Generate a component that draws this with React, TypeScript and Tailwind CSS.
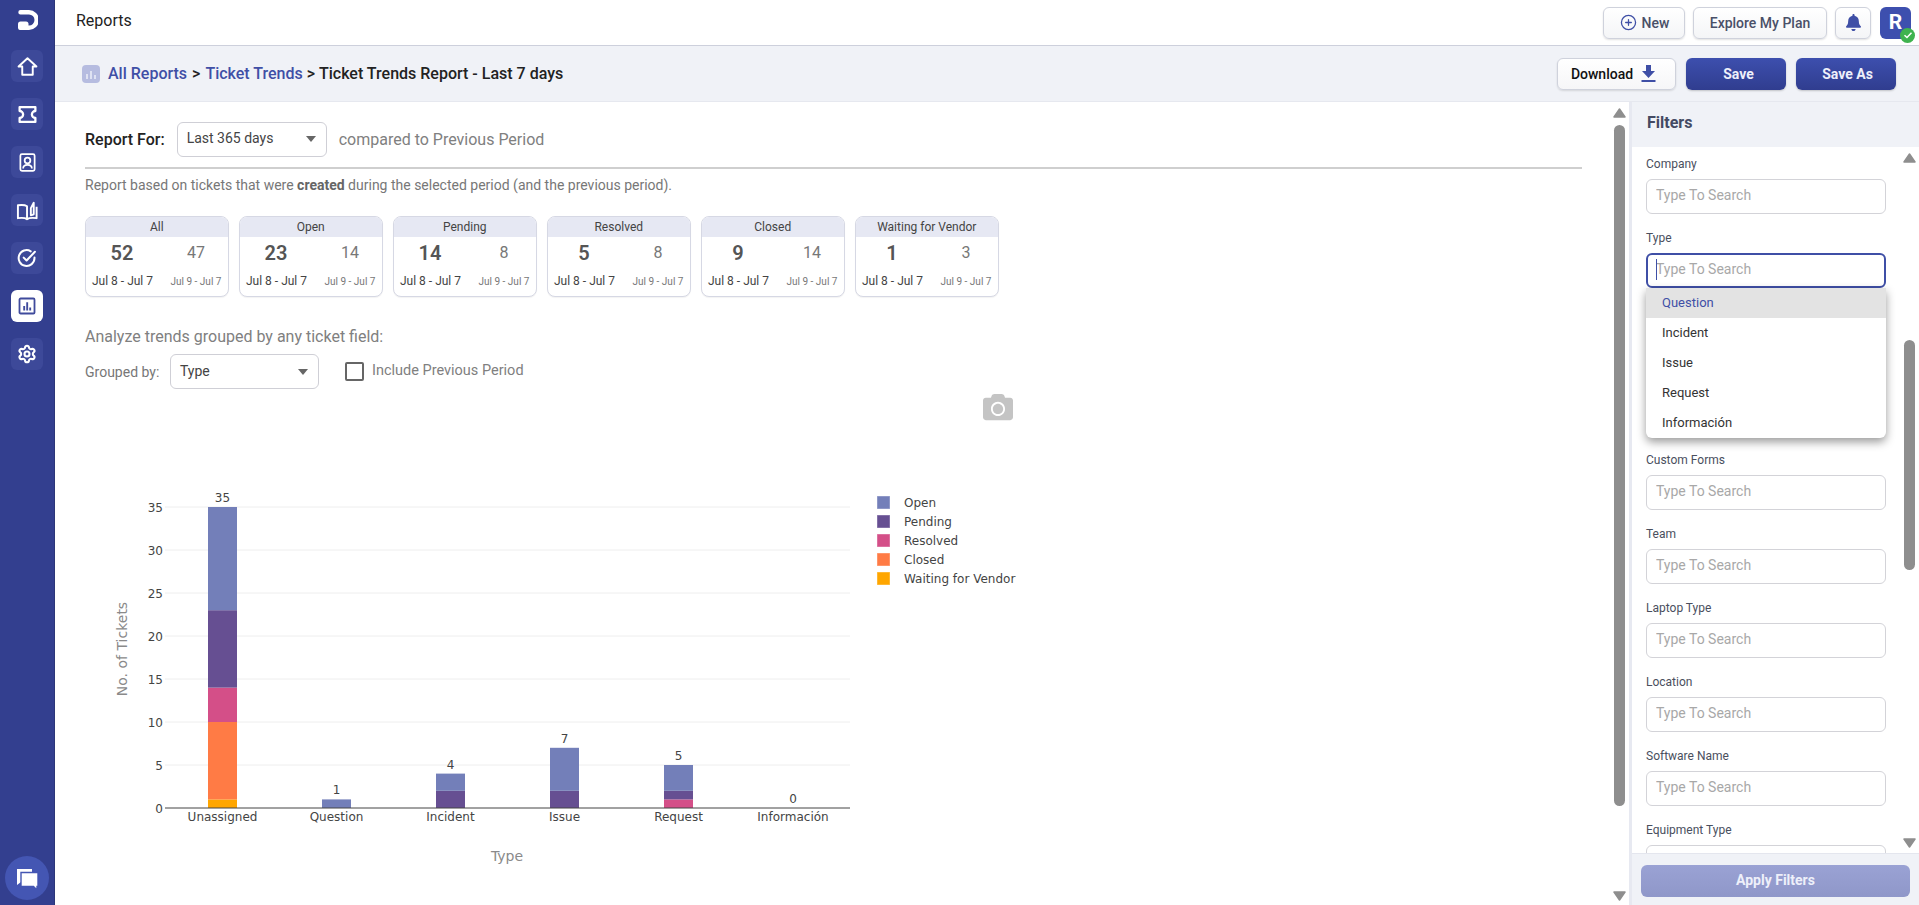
import { CirclePlus, Settings } from 'lucide-react';
import { FaBell, FaCamera } from 'react-icons/fa';

const cards = [
  { label: 'All', now: 52, prev: 47 },
  { label: 'Open', now: 23, prev: 14 },
  { label: 'Pending', now: 14, prev: 8 },
  { label: 'Resolved', now: 5, prev: 8 },
  { label: 'Closed', now: 9, prev: 14 },
  { label: 'Waiting for Vendor', now: 1, prev: 3 },
];

const colors = { open: '#737fb9', pending: '#664f92', resolved: '#d44f88', closed: '#ff7b45', waiting: '#ffa600' };

const legend = [
  { label: 'Open', color: colors.open },
  { label: 'Pending', color: colors.pending },
  { label: 'Resolved', color: colors.resolved },
  { label: 'Closed', color: colors.closed },
  { label: 'Waiting for Vendor', color: colors.waiting },
];

// bottom to top, same order as the stacked trace
const bars = [
  { name: 'Unassigned', x: 222.5, total: 35, parts: [[colors.waiting, 1], [colors.closed, 9], [colors.resolved, 4], [colors.pending, 9], [colors.open, 12]] },
  { name: 'Question', x: 336.5, total: 1, parts: [[colors.open, 1]] },
  { name: 'Incident', x: 450.5, total: 4, parts: [[colors.pending, 2], [colors.open, 2]] },
  { name: 'Issue', x: 564.5, total: 7, parts: [[colors.pending, 2], [colors.open, 5]] },
  { name: 'Request', x: 678.5, total: 5, parts: [[colors.resolved, 1], [colors.pending, 1], [colors.open, 3]] },
  { name: 'Información', x: 793, total: 0, parts: [] },
] as { name: string; x: number; total: number; parts: [string, number][] }[];

const filtersTop = ['Company', 'Type'];
const filtersBottom = ['Custom Forms', 'Team', 'Laptop Type', 'Location', 'Software Name', 'Equipment Type'];

const options = ['Question', 'Incident', 'Issue', 'Request', 'Información'];

const Y0 = 808;
const UNIT = 8.6;

function Logo() {
  return (
    <svg width="20" height="20" viewBox="0 0 20 20">
      <path d="M2.5 2.3H11A7.7 7.7 0 0 1 11 17.7H3" fill="none" stroke="#fff" strokeWidth="4.4" strokeLinecap="round" />
      <rect x="0" y="11.5" width="10.5" height="8.5" rx="2.5" fill="#fff" />
    </svg>
  );
}

function NavIcon({ children, active }: { children: React.ReactNode; active?: boolean }) {
  return (
    <div className={active ? 'w-8 h-8 rounded-md bg-white flex items-center justify-center' : 'w-8 h-8 rounded-md bg-[#3d4999] flex items-center justify-center'}>
      {children}
    </div>
  );
}

function Sidebar() {
  return (
    <aside className="w-[55px] shrink-0 h-full bg-[#333f8f] border-r border-[#2c3678] flex flex-col items-center">
      <div className="h-[50px] w-full flex items-start justify-center pt-[10px] pl-px">
        <Logo />
      </div>
      <div className="flex flex-col gap-4">
        <NavIcon>
          <svg width="21" height="21" viewBox="0 0 24 24" fill="none" stroke="#fff" strokeWidth="2.2" strokeLinejoin="round">
            <path d="M12 2.5 1.8 12H6v9.5h12V12h4.2z" />
          </svg>
        </NavIcon>
        <NavIcon>
          <svg width="21" height="21" viewBox="0 0 24 24" fill="none" stroke="#fff" strokeWidth="2.6" strokeLinejoin="round">
            <path d="M3 3.5h18V8a4 4 0 0 0 0 8v4.500H3V16a4 4 0 0 0 0-8z" />
          </svg>
        </NavIcon>
        <NavIcon>
          <svg width="19" height="19" viewBox="0 0 24 24" fill="none" stroke="#fff" strokeWidth="2.2">
            <rect x="3" y="1.5" width="18" height="21" rx="2" />
            <circle cx="12" cy="9.5" r="3.6" />
            <path d="M6.5 19.5c0-3 2.5-4.6 5.500-4.600s5.500 1.600 5.500 4.600" />
          </svg>
        </NavIcon>
        <NavIcon>
          <svg width="23" height="23" viewBox="0 0 24 24" fill="none" stroke="#fff" strokeWidth="2" strokeLinejoin="round">
            <path d="M11.500 7.500C10 6.500 6 6 2 6.500V20c4-.5 8 0 9.500 1z" />
            <path d="M11.500 21c1.500-1 6-1.500 10-1V8" />
            <path d="M15.500 17V9.500L18.500 4V16z" />
          </svg>
        </NavIcon>
        <NavIcon>
          <svg width="20" height="20" viewBox="0 0 24 24" fill="none" stroke="#fff" strokeWidth="2.4" strokeLinecap="round" strokeLinejoin="round">
            <path d="M21 11.500V12a9.500 9.500 0 1 1-4.500-8" />
            <path d="M8 11.500l3.500 3.500L21.500 4.500" />
          </svg>
        </NavIcon>
        <NavIcon active>
          <svg width="18" height="18" viewBox="0 0 24 24" fill="#3f4a9c">
            <rect x="2" y="2" width="20" height="20" rx="1.500" fill="none" stroke="#3f4a9c" strokeWidth="2.400" />
            <rect x="7" y="12" width="2.500" height="6" />
            <rect x="11" y="7" width="2.500" height="11" />
            <rect x="15" y="14" width="2.500" height="4" />
          </svg>
        </NavIcon>
        <NavIcon>
          <Settings size={20} color="#fff" strokeWidth={2.5} />
        </NavIcon>
      </div>
      <div className="mt-auto mb-[5px] w-11 h-11 rounded-full bg-[#4456b3] flex items-center justify-center">
        <svg width="24" height="24" viewBox="0 0 24 24">
          <path d="M2 3h15v13H6l-4 3z" fill="#fff" />
          <path d="M6 6.500h17V20.500h-1V24l-3.500-3.500H6z" fill="#fff" stroke="#4456b3" strokeWidth="1.400" />
        </svg>
      </div>
    </aside>
  );
}

function TopButton({ children, className }: { children: React.ReactNode; className: string }) {
  return (
    <button className={'h-8 rounded-md border border-[#cfd2dc] bg-gradient-to-b from-white to-[#f4f5f7] shadow-[0_1px_2px_rgba(0,0,0,0.12)] flex items-center justify-center text-sm font-medium text-[#4a5068] ' + className}>
      {children}
    </button>
  );
}

function TopBar() {
  return (
    <header className="h-[46px] shrink-0 bg-white border-b border-[#cdd0dc] flex items-center pl-[21px] pr-2">
      <span className="text-base text-[#222] -mt-1">Reports</span>
      <div className="ml-auto flex items-center">
        <TopButton className="w-[82px] gap-[5px] pl-px">
          <CirclePlus size={17} color="#3f4fa6" strokeWidth={1.800} />
          New
        </TopButton>
        <TopButton className="w-[134px] ml-2">Explore My Plan</TopButton>
        <TopButton className="w-9 ml-2">
          <FaBell size={17} color="#3f4fa6" />
        </TopButton>
        <div className="relative w-[31px] h-8 ml-[9px] rounded-md bg-[#3d4fae] flex items-center justify-center text-white text-[21px] font-bold">
          R
          <span className="absolute -right-1 -bottom-1 w-[15px] h-[15px] rounded-full bg-[#3fb34f] flex items-center justify-center">
            <svg width="10" height="10" viewBox="0 0 10 10" fill="none" stroke="#fff" strokeWidth="1.500">
              <path d="M1.500 5.200 4 7.500 8.500 2.800" />
            </svg>
          </span>
        </div>
      </div>
    </header>
  );
}

function BreadcrumbBar() {
  return (
    <div className="h-[56px] shrink-0 bg-[#f0f2f7] border-b border-[#e6e8ef] flex items-center pl-[27px] pr-[23px]">
      <span className="w-[18px] h-[18px] rounded-sm bg-[#b6bce0] flex items-end justify-center gap-[2px] pb-1">
        <i className="block w-[2px] h-[5px] bg-[#dfe2f2]" />
        <i className="block w-[2px] h-2 bg-[#dfe2f2]" />
        <i className="block w-[2px] h-1 bg-[#dfe2f2]" />
      </span>
      <div className="ml-2 text-base font-medium text-[#222] whitespace-nowrap">
        <span className="text-[#3f4fa6]">All Reports</span>
        <span className="mx-[5px]">&gt;</span>
        <span className="text-[#3f4fa6]">Ticket Trends</span>
        <span className="mx-[4px]">&gt;</span>
        <span>Ticket Trends Report - Last 7 days</span>
      </div>
      <div className="ml-auto flex items-center gap-[10px]">
        <button className="w-[119px] h-8 rounded-md border border-[#cfd2dc] bg-gradient-to-b from-white to-[#f6f6f8] shadow-[0_1px_2px_rgba(0,0,0,0.12)] flex items-center justify-center gap-2 pr-[6px] text-sm font-medium text-[#111]">
          Download
          <svg width="15" height="18" viewBox="0 0 15 18" fill="#3f4fa6">
            <path d="M5 0h5v6h4l-6.500 7L1 6h4z" />
            <rect x="0.500" y="15" width="14" height="2" />
          </svg>
        </button>
        <button className="w-[100px] h-8 rounded-md bg-gradient-to-b from-[#3d4fae] to-[#303d8f] shadow-[0_1px_2px_rgba(0,0,0,0.2)] pl-[5px] text-sm font-bold text-[#eef0fa]">Save</button>
        <button className="w-[100px] h-8 rounded-md bg-gradient-to-b from-[#3d4fae] to-[#303d8f] shadow-[0_1px_2px_rgba(0,0,0,0.2)] pl-[3px] text-sm font-bold text-[#eef0fa]">Save As</button>
      </div>
    </div>
  );
}

function Caret() {
  return <span className="w-0 h-0 border-x-[5px] border-x-transparent border-t-[6px] border-t-[#666]" />;
}

function Select({ value, className }: { value: string; className: string }) {
  return (
    <div className={'h-[35px] rounded-md border border-[#cfcfd6] bg-white flex items-center justify-between pl-[9px] pr-[10px] text-sm text-[#444] ' + className}>
      <span className="-mt-[2px]">{value}</span>
      <Caret />
    </div>
  );
}

function StatCard({ label, now, prev }: { label: string; now: number; prev: number }) {
  return (
    <div className="w-[143.5px] h-[81px] rounded-lg border border-[#d6d8e4] bg-white overflow-hidden shadow-[0_1px_1px_rgba(0,0,0,0.05)]">
      <div className="h-5 bg-[#e6e8f3] text-xs text-[#444] text-center leading-[20px]">{label}</div>
      <div className="flex h-[30px] items-center pt-[2px]">
        <div className="w-[72px] text-center text-xl font-semibold text-[#555]">{now}</div>
        <div className="w-[60px] ml-2 text-center text-base text-[#777]">{prev}</div>
      </div>
      <div className="flex h-7 items-center">
        <div className="w-[73px] text-center text-xs text-[#444]">Jul 8 - Jul 7</div>
        <div className="w-[60px] ml-[7px] text-center text-[10px] text-[#777] whitespace-nowrap">Jul 9 - Jul 7</div>
      </div>
    </div>
  );
}

function Chart() {
  return (
    <svg width="960" height="390" viewBox="85 490 960 390" className="block font-['DejaVu_Sans',sans-serif] text-xs mt-[70px]">
      {[35, 30, 25, 20, 15, 10, 5].map((v) => (
        <line key={v} x1="165" x2="850" y1={Y0 - v * UNIT} y2={Y0 - v * UNIT} stroke="#eeeeee" />
      ))}
      {[35, 30, 25, 20, 15, 10, 5, 0].map((v) => (
        <text key={v} x="163" y={Y0 - v * UNIT + 4.500} textAnchor="end" fill="#444">
          {v}
        </text>
      ))}
      {bars.map((b) => {
        let bottom = Y0;
        return (
          <g key={b.name}>
            {b.parts.map(([color, n], i) => {
              const h = n * UNIT;
              bottom -= h;
              return <rect key={i} x={b.x - 14.500} y={bottom} width="29" height={h} fill={color} />;
            })}
            <text x={b.x} y={Y0 - b.total * UNIT - 5} textAnchor="middle" fill="#444">
              {b.total}
            </text>
            <text x={b.x} y="821" textAnchor="middle" fill="#444">
              {b.name}
            </text>
          </g>
        );
      })}
      <line x1="165" x2="850" y1={Y0} y2={Y0} stroke="#444" />
      <text x="123" y="649" transform="rotate(-90 123 649)" textAnchor="middle" dominantBaseline="middle" fontSize="14" fill="#8a8a8a">
        No. of Tickets
      </text>
      <text x="507" y="861" textAnchor="middle" fontSize="14" fill="#8a8a8a">
        Type
      </text>
      {legend.map((l, i) => (
        <g key={l.label}>
          <rect x="877.500" y={496.500 + i * 19} width="12" height="12" fill={l.color} stroke={l.color} strokeOpacity="0.6" />
          <text x="904" y={507 + i * 19} fill="#444">
            {l.label}
          </text>
        </g>
      ))}
    </svg>
  );
}

function Arrow({ up, className }: { up?: boolean; className?: string }) {
  return (
    <svg width="13" height="10" viewBox="0 0 13 10" className={'block shrink-0 ' + (className || '')} fill="#8e8e8e" stroke="#8e8e8e" strokeWidth="1.500" strokeLinejoin="round">
      <path d={up ? 'M6.500 1 12 9H1z' : 'M1 1h11L6.500 9z'} />
    </svg>
  );
}

function FilterField({ label, focused }: { label: string; focused?: boolean }) {
  return (
    <div className="mb-4">
      <div className="h-4 text-xs leading-4 text-[#4a4f5e] mb-[7px]">{label}</div>
      <div className="relative w-[240px]">
        <input
          placeholder="Type To Search"
          readOnly
          className={
            focused
              ? 'block w-full h-[35px] rounded-md border-2 border-[#3f4fa6] pl-[8px] pb-[3px] text-sm outline-none placeholder:text-[#a8a8a8]'
              : 'block w-full h-[35px] rounded-md border border-[#d3d3d8] pl-[9px] pb-[3px] text-sm outline-none placeholder:text-[#a8a8a8]'
          }
        />
        {focused && (
          <>
            <span className="absolute left-[10px] top-[6px] w-px h-[21px] bg-[#3f4fa6]" />
            <ul className="absolute left-0 top-[35px] w-full z-10 bg-white rounded-b-md shadow-[0_4px_10px_rgba(0,0,0,0.4)] text-[13px] text-[#333]">
              {options.map((o, i) => (
                <li key={o} className={i === 0 ? 'h-[30px] pl-4 flex items-center bg-[#e3e3e3] text-[#3f4fa6]' : 'h-[30px] pl-4 flex items-center'}>
                  {o}
                </li>
              ))}
            </ul>
          </>
        )}
      </div>
    </div>
  );
}

function FiltersPanel() {
  return (
    <aside className="w-[290px] shrink-0 border-l-[3px] border-[#e7e9f1] flex flex-col bg-white">
      <div className="h-[45px] shrink-0 bg-[#f0f2f7] flex items-center pl-[15px] pb-[3px] text-base font-bold text-[#444a63]">Filters</div>
      <div className="flex-1 min-h-0 flex">
        <div className="flex-1 overflow-hidden pt-[9px] pl-[14px]">
          {filtersTop.map((f) => (
            <FilterField key={f} label={f} focused={f === 'Type'} />
          ))}
          {/* rows covered by the open dropdown */}
          <div className="h-[148px]" />
          {filtersBottom.map((f) => (
            <FilterField key={f} label={f} />
          ))}
        </div>
        <div className="w-[13px] mr-[3px] flex flex-col items-center pt-[6px] pb-[5px]">
          <Arrow up />
          <div className="w-[11px] h-[230px] mt-[177px] rounded-md bg-[#8e8e8e]" />
          <Arrow className="mt-auto" />
        </div>
      </div>
      <div className="h-[52px] shrink-0 bg-[#f0f2f7] border-t border-[#e4e6ee] pl-[9px] pt-[11px]">
        <button className="w-[269px] h-8 rounded-md bg-gradient-to-b from-[#9aa2d4] to-[#8f97c9] pb-[2px] text-sm font-bold text-[#eef0fa]">Apply Filters</button>
      </div>
    </aside>
  );
}

export default function App() {
  return (
    <div className="w-full h-[905px] flex overflow-hidden bg-white font-['Roboto',sans-serif]">
      <Sidebar />
      <div className="flex-1 min-w-0 flex flex-col">
        <TopBar />
        <BreadcrumbBar />
        <div className="flex-1 min-h-0 flex">
          <main className="flex-1 min-w-0 flex overflow-hidden">
            <div className="flex-1 min-w-0 pt-5 pl-[30px] pr-[31px]">
              <div className="flex items-center h-[34px]">
                <span className="text-base font-medium text-[#222] pt-[2px]">Report For:</span>
                <Select value="Last 365 days" className="w-[150px] ml-3" />
                <span className="ml-3 text-base text-[#808080] pt-[2px]">compared to Previous Period</span>
              </div>
              <div className="h-[2px] mt-[11px] bg-[#cfcfcf]" />
              <p className="mt-2 h-4 text-sm leading-4 text-[#777]">
                Report based on tickets that were <b className="font-bold text-[#666]">created</b> during the selected period (and the previous period).
              </p>
              <div className="flex gap-[10.500px] mt-[23px]">
                {cards.map((c) => (
                  <StatCard key={c.label} {...c} />
                ))}
              </div>
              <p className="mt-[30px] text-base leading-5 text-[#808080]">Analyze trends grouped by any ticket field:</p>
              <div className="flex items-center mt-[7px]">
                <span className="w-[85px] text-sm text-[#777]">Grouped by:</span>
                <Select value="Type" className="w-[149px]" />
                <span className="ml-[26px] w-[19px] h-[19px] rounded-[2px] border-2 border-[#666]" />
                <span className="ml-2 text-[14.5px] text-[#808080] -mt-[2px]">Include Previous Period</span>
              </div>
              <div className="mt-[5px] ml-[898px] h-[26px] flex items-center">
                <FaCamera size={30} color="#c4c4c4" />
              </div>
              <Chart />
            </div>
            <div className="w-[13px] mr-[3px] flex flex-col items-center pt-[6px] pb-1">
              <Arrow up />
              <div className="w-[11px] h-[681px] mt-[7px] rounded-md bg-[#8e8e8e]" />
              <Arrow className="mt-auto" />
            </div>
          </main>
          <FiltersPanel />
        </div>
      </div>
    </div>
  );
}
